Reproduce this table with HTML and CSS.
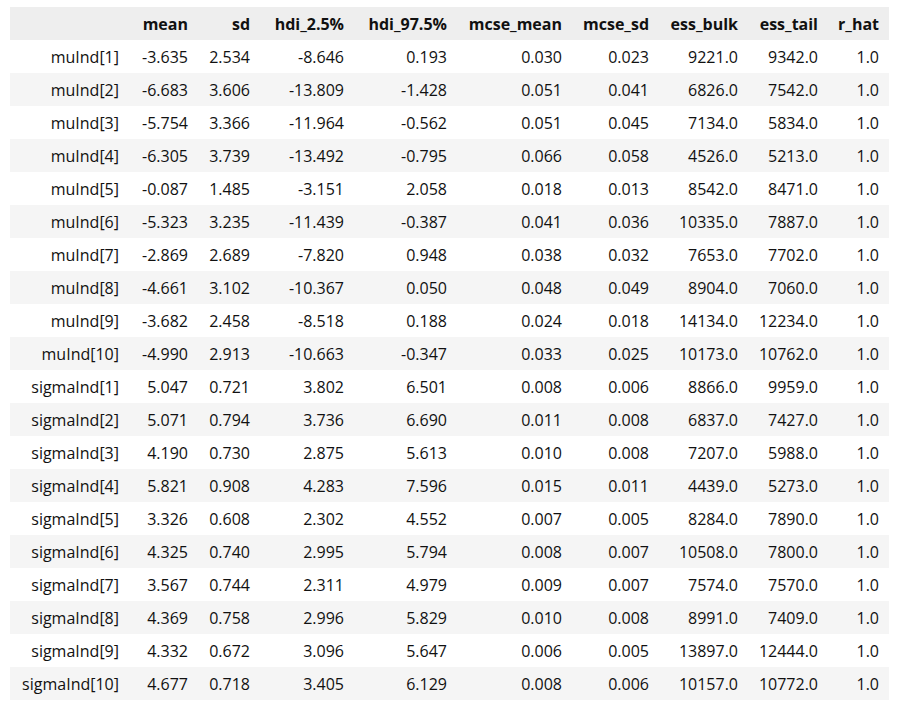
FILE: index.html
```html
<!DOCTYPE html>
<html>
<head>
<meta charset="utf-8">
<link rel="stylesheet" href="styles.css">
</head>
<body>
<table class="df">
<colgroup>
<col class="c-idx"><col class="c-mean"><col class="c-sd"><col class="c-h25"><col class="c-h975"><col class="c-mm"><col class="c-ms"><col class="c-eb"><col class="c-et"><col class="c-rh">
</colgroup>
<thead>
<tr><th></th><th>mean</th><th>sd</th><th>hdi_2.5%</th><th>hdi_97.5%</th><th>mcse_mean</th><th>mcse_sd</th><th>ess_bulk</th><th>ess_tail</th><th>r_hat</th></tr>
</thead>
<tbody>
<tr><td>muInd[1]</td><td>-3.635</td><td>2.534</td><td>-8.646</td><td>0.193</td><td>0.030</td><td>0.023</td><td>9221.0</td><td>9342.0</td><td>1.0</td></tr>
<tr><td>muInd[2]</td><td>-6.683</td><td>3.606</td><td>-13.809</td><td>-1.428</td><td>0.051</td><td>0.041</td><td>6826.0</td><td>7542.0</td><td>1.0</td></tr>
<tr><td>muInd[3]</td><td>-5.754</td><td>3.366</td><td>-11.964</td><td>-0.562</td><td>0.051</td><td>0.045</td><td>7134.0</td><td>5834.0</td><td>1.0</td></tr>
<tr><td>muInd[4]</td><td>-6.305</td><td>3.739</td><td>-13.492</td><td>-0.795</td><td>0.066</td><td>0.058</td><td>4526.0</td><td>5213.0</td><td>1.0</td></tr>
<tr><td>muInd[5]</td><td>-0.087</td><td>1.485</td><td>-3.151</td><td>2.058</td><td>0.018</td><td>0.013</td><td>8542.0</td><td>8471.0</td><td>1.0</td></tr>
<tr><td>muInd[6]</td><td>-5.323</td><td>3.235</td><td>-11.439</td><td>-0.387</td><td>0.041</td><td>0.036</td><td>10335.0</td><td>7887.0</td><td>1.0</td></tr>
<tr><td>muInd[7]</td><td>-2.869</td><td>2.689</td><td>-7.820</td><td>0.948</td><td>0.038</td><td>0.032</td><td>7653.0</td><td>7702.0</td><td>1.0</td></tr>
<tr><td>muInd[8]</td><td>-4.661</td><td>3.102</td><td>-10.367</td><td>0.050</td><td>0.048</td><td>0.049</td><td>8904.0</td><td>7060.0</td><td>1.0</td></tr>
<tr><td>muInd[9]</td><td>-3.682</td><td>2.458</td><td>-8.518</td><td>0.188</td><td>0.024</td><td>0.018</td><td>14134.0</td><td>12234.0</td><td>1.0</td></tr>
<tr><td>muInd[10]</td><td>-4.990</td><td>2.913</td><td>-10.663</td><td>-0.347</td><td>0.033</td><td>0.025</td><td>10173.0</td><td>10762.0</td><td>1.0</td></tr>
<tr><td>sigmaInd[1]</td><td>5.047</td><td>0.721</td><td>3.802</td><td>6.501</td><td>0.008</td><td>0.006</td><td>8866.0</td><td>9959.0</td><td>1.0</td></tr>
<tr><td>sigmaInd[2]</td><td>5.071</td><td>0.794</td><td>3.736</td><td>6.690</td><td>0.011</td><td>0.008</td><td>6837.0</td><td>7427.0</td><td>1.0</td></tr>
<tr><td>sigmaInd[3]</td><td>4.190</td><td>0.730</td><td>2.875</td><td>5.613</td><td>0.010</td><td>0.008</td><td>7207.0</td><td>5988.0</td><td>1.0</td></tr>
<tr><td>sigmaInd[4]</td><td>5.821</td><td>0.908</td><td>4.283</td><td>7.596</td><td>0.015</td><td>0.011</td><td>4439.0</td><td>5273.0</td><td>1.0</td></tr>
<tr><td>sigmaInd[5]</td><td>3.326</td><td>0.608</td><td>2.302</td><td>4.552</td><td>0.007</td><td>0.005</td><td>8284.0</td><td>7890.0</td><td>1.0</td></tr>
<tr><td>sigmaInd[6]</td><td>4.325</td><td>0.740</td><td>2.995</td><td>5.794</td><td>0.008</td><td>0.007</td><td>10508.0</td><td>7800.0</td><td>1.0</td></tr>
<tr><td>sigmaInd[7]</td><td>3.567</td><td>0.744</td><td>2.311</td><td>4.979</td><td>0.009</td><td>0.007</td><td>7574.0</td><td>7570.0</td><td>1.0</td></tr>
<tr><td>sigmaInd[8]</td><td>4.369</td><td>0.758</td><td>2.996</td><td>5.829</td><td>0.010</td><td>0.008</td><td>8991.0</td><td>7409.0</td><td>1.0</td></tr>
<tr><td>sigmaInd[9]</td><td>4.332</td><td>0.672</td><td>3.096</td><td>5.647</td><td>0.006</td><td>0.005</td><td>13897.0</td><td>12444.0</td><td>1.0</td></tr>
<tr><td>sigmaInd[10]</td><td>4.677</td><td>0.718</td><td>3.405</td><td>6.129</td><td>0.008</td><td>0.006</td><td>10157.0</td><td>10772.0</td><td>1.0</td></tr>
</tbody>
</table>
</body>
</html>
```
FILE: styles.css
```css
html, body {
  margin: 0;
  padding: 0;
  background: #ffffff;
}
body {
  padding: 7px 0 0 10px;
  font-family: "Open Sans", "Noto Sans", sans-serif;
  font-size: 16px;
  color: #111111;
}
.df {
  border-collapse: collapse;
  border-spacing: 0;
  table-layout: fixed;
  width: 879px;
}
.c-idx { width: 119px; }
.c-mean { width: 69px; }
.c-sd { width: 62px; }
.c-h25 { width: 94px; }
.c-h975 { width: 103px; }
.c-mm { width: 115px; }
.c-ms { width: 87px; }
.c-eb { width: 89px; }
.c-et { width: 80px; }
.c-rh { width: 61px; }
.df th, .df td {
  height: 33px;
  padding: 0 10px 0 0;
  text-align: right;
  white-space: nowrap;
  box-sizing: border-box;
  vertical-align: middle;
}
.df th {
  font-weight: 700;
}
.df thead tr {
  background: #eeeeee;
}
.df tbody tr:nth-child(even) {
  background: #f5f5f5;
}
```
